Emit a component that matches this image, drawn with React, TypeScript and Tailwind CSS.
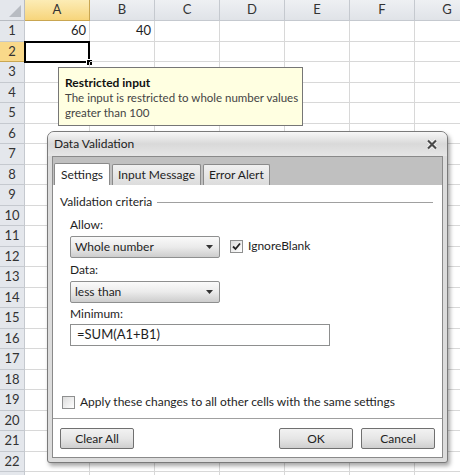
const COLS = ["A", "B", "C", "D", "E", "F", "G"];
const ROWS = Array.from({ length: 23 }, (_, i) => i + 1);

const font = { fontFamily: "Lato, 'Noto Sans', sans-serif" };

function Select({ value }: { value: string }) {
  return (
    <div className="flex h-[22px] w-[150px] items-center justify-between rounded-[2px] border border-[#8e8f8f] bg-gradient-to-b from-[#fafafa] via-[#ebebeb] to-[#cdcdcd] pl-[4px] pr-[6px]">
      <span>{value}</span>
      <svg width="7" height="4" viewBox="0 0 7 4">
        <path d="M0 0h7L3.5 4z" fill="#333" />
      </svg>
    </div>
  );
}

function Check({ checked }: { checked?: boolean }) {
  return (
    <div className="flex h-[13px] w-[13px] items-center justify-center border border-[#8e8f8f] bg-gradient-to-br from-[#dcdcdc] to-white">
      {checked && (
        <svg width="9" height="9" viewBox="0 0 9 9">
          <path d="M1 4.5l2.5 2.5L8 1.5" stroke="#222" strokeWidth="1.8" fill="none" />
        </svg>
      )}
    </div>
  );
}

function Button({ label }: { label: string }) {
  return (
    <div className="flex h-[21px] w-[74px] items-center justify-center rounded-[2px] border border-[#707070] bg-gradient-to-b from-[#f2f2f2] via-[#e6e6e6] to-[#cfcfcf] text-[#222]">
      {label}
    </div>
  );
}

export default function App() {
  return (
    <div className="relative h-[475px] w-[460px] overflow-hidden bg-white text-[12px] text-[#1e1e1e]" style={font}>
      {/* column headers */}
      <div className="flex h-[21px]">
        <div className="relative w-[25px] shrink-0 border-b border-r border-[#b8bcc2] bg-[#e4e7ec]">
          <svg className="absolute bottom-[3px] right-[3px]" width="12" height="12" viewBox="0 0 12 12">
            <path d="M12 0v12H0z" fill="#b8bcc2" />
          </svg>
        </div>
        {COLS.map((c) => (
          <div
            key={c}
            className={
              c === "A"
                ? "flex w-[65px] shrink-0 items-center justify-center border-b border-r border-[#c9a651] bg-gradient-to-b from-[#fcecb5] to-[#f7d57b] text-[13px] text-[#333]"
                : "flex w-[65px] shrink-0 items-center justify-center border-b border-r border-[#c5c9cf] bg-gradient-to-b from-[#eef0f3] to-[#e0e3e8] text-[13px] text-[#333]"
            }
          >
            {c}
          </div>
        ))}
      </div>
      {/* rows */}
      {ROWS.map((r) => (
        <div key={r} className="flex h-[20.5px]">
          <div
            className={
              r === 2
                ? "flex w-[25px] shrink-0 items-center justify-center border-b border-r border-[#c9a651] bg-[#f9d98a] text-[13px] text-[#333]"
                : "flex w-[25px] shrink-0 items-center justify-center border-b border-r border-[#c5c9cf] bg-[#e4e7ec] text-[13px] text-[#333]"
            }
          >
            {r}
          </div>
          {COLS.map((c) => (
            <div
              key={c}
              className="relative flex w-[65px] shrink-0 items-center justify-end border-b border-r border-[#d8d8d8] pr-[3px] text-[13px]"
            >
              {r === 1 && c === "A" && "60"}
              {r === 1 && c === "B" && "40"}
              {r === 2 && c === "A" && (
                <div className="absolute -left-px -top-px h-[22px] w-[66px] border-2 border-black">
                  <div className="absolute -bottom-[5px] -right-[5px] h-[7px] w-[7px] border border-white bg-black" />
                </div>
              )}
            </div>
          ))}
        </div>
      ))}

      {/* input message tooltip */}
      <div className="absolute left-[58px] top-[67px] h-[59px] w-[245px] border border-[#767676] bg-[#ffffe1] px-[6px] pt-[7px] leading-[15px]">
        <div className="font-bold text-[#111]">Restricted input</div>
        <div className="whitespace-nowrap text-[11.5px] text-[#444]">
          The input is restricted to whole number values
          <br />
          greater than 100
        </div>
      </div>

      {/* dialog */}
      <div className="absolute left-[47px] top-[131px] flex h-[332px] w-[401px] flex-col rounded-t-[7px] rounded-b-[3px] border border-[#7a7a7a] bg-[#dcdcdc] shadow-[2px_3px_4px_rgba(0,0,0,0.35)]">
        <div className="flex h-[24px] items-center justify-between rounded-t-[6px] bg-gradient-to-b from-[#f7f7f7] via-[#d9d9d9] to-[#e6e6e6] pl-[6px] pr-[9px]">
          <span className="text-[#222]">Data Validation</span>
          <svg width="12" height="11" viewBox="0 0 12 11">
            <path d="M2 1.5l8 8M10 1.5l-8 8" stroke="#fff" strokeWidth="3.6" />
            <path d="M2 1.5l8 8M10 1.5l-8 8" stroke="#4a4a4a" strokeWidth="2.2" />
          </svg>
        </div>
        <div className="mx-[4px] mb-[4px] flex flex-1 flex-col border border-[#8a8a8a] bg-white">
          <div className="flex h-[28px] items-end gap-[2px] bg-[#c0c0c0] pl-[1px]">
            <div className="flex h-[22px] items-center rounded-t-[2px] border border-b-0 border-[#8a8a8a] bg-white px-[6px]">Settings</div>
            <div className="flex h-[21px] items-center rounded-t-[2px] border border-b-0 border-[#8a8a8a] bg-gradient-to-b from-[#f0f0f0] to-[#dcdcdc] px-[5px]">Input Message</div>
            <div className="flex h-[21px] items-center rounded-t-[2px] border border-b-0 border-[#8a8a8a] bg-gradient-to-b from-[#f0f0f0] to-[#dcdcdc] px-[5px]">Error Alert</div>
          </div>
          <div className="flex flex-1 flex-col pl-[7px] pr-[9px] pt-[8px]">
            <div className="flex items-center gap-[5px]">
              <span>Validation criteria</span>
              <div className="h-px flex-1 bg-[#a0a0a0]" />
            </div>
            <div className="ml-[10px] mt-[6px] flex flex-col">
              <span className="leading-[16px]">Allow:</span>
              <div className="mt-[3px] flex items-start gap-[10px]">
                <Select value="Whole number" />
                <div className="flex items-center gap-[5px] pt-[1px]">
                  <Check checked />
                  <span>IgnoreBlank</span>
                </div>
              </div>
              <span className="mt-[4px] leading-[16px]">Data:</span>
              <div className="mt-[3px]">
                <Select value="less than" />
              </div>
              <span className="mt-[3px] leading-[16px]">Minimum:</span>
              <div className="mt-[2px] flex h-[22px] w-[260px] items-center border border-[#8e8f8f] bg-white pl-[6px] text-[13px]">=SUM(A1+B1)</div>
            </div>
            <div className="mt-auto mb-[7px] ml-[2px] flex items-center gap-[5px]">
              <Check />
              <span>Apply these changes to all other cells with the same settings</span>
            </div>
          </div>
          <div className="flex h-[39px] items-start justify-between border-t border-[#a0a0a0] px-[7px] pt-[9px]">
            <Button label="Clear All" />
            <div className="flex gap-[8px]">
              <Button label="OK" />
              <Button label="Cancel" />
            </div>
          </div>
        </div>
      </div>
    </div>
  );
}
